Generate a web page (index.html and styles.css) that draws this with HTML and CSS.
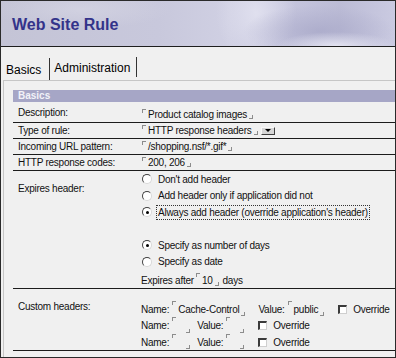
FILE: index.html
```html
<!DOCTYPE html>
<html>
<head>
<meta charset="utf-8">
<link rel="stylesheet" href="styles.css">
</head>
<body>
<div class="frame">
  <header class="banner">
    <h1 class="title">Web Site Rule</h1>
  </header>
  <nav class="tabs">
    <div class="tab tab-first">Basics</div>
    <div class="tab tab-second">Administration</div>
  </nav>
  <div class="panel">
    <div class="bar">Basics</div>
    <div class="row row-desc">
      <div class="label">Description:</div>
      <div class="value"><span class="fl"></span>Product catalog images<span class="fr"></span></div>
    </div>
    <div class="row">
      <div class="label">Type of rule:</div>
      <div class="value"><span class="fl"></span>HTTP response headers<span class="fr"></span><span class="drop"><span class="tri"></span></span></div>
    </div>
    <div class="row">
      <div class="label">Incoming URL pattern:</div>
      <div class="value"><span class="fl"></span>/shopping.nsf/*.gif*<span class="fr"></span></div>
    </div>
    <div class="row">
      <div class="label">HTTP response codes:</div>
      <div class="value"><span class="fl"></span>200, 206<span class="fr"></span></div>
    </div>
    <div class="row row-top row-expires">
      <div class="label label-pad">Expires header:</div>
      <div class="value options">
        <div class="opt"><span class="radio"></span>Don't add header</div>
        <div class="opt"><span class="radio"></span>Add header only if application did not</div>
        <div class="opt"><span class="radio on"></span><span class="focus">Always add header (override application's header)</span></div>
        <div class="opt"></div>
        <div class="opt"><span class="radio on"></span>Specify as number of days</div>
        <div class="opt"><span class="radio"></span>Specify as date</div>
        <div class="after">Expires after <span class="fl"></span>10<span class="fr"></span><span class="days">days</span></div>
      </div>
    </div>
    <div class="row row-top row-custom">
      <div class="label label-pad">Custom headers:</div>
      <div class="value headers">
        <div class="hdr hdr-1">Name: <span class="fl"></span>Cache-Control<span class="fr"></span><span class="val-label">Value: </span><span class="fl"></span>public<span class="fr"></span><span class="check"></span>Override</div>
        <div class="hdr hdr-2">Name: <span class="fl"></span><span class="fr empty"></span><span class="val-label">Value: </span><span class="fl"></span><span class="fr empty"></span><span class="check"></span>Override</div>
        <div class="hdr hdr-3">Name: <span class="fl"></span><span class="fr empty"></span><span class="val-label">Value: </span><span class="fl"></span><span class="fr empty"></span><span class="check"></span>Override</div>
      </div>
    </div>
  </div>
</div>
</body>
</html>
```
FILE: styles.css
```css
html, body {
  margin: 0;
  padding: 0;
  background: #f0f0f0;
}

.frame {
  width: 396px;
  height: 358px;
  box-sizing: border-box;
  border: 1px solid #2a2a2a;
  background: #f0f0f0;
  overflow: hidden;
  font-family: "Liberation Sans", Arial, sans-serif;
  color: #111;
}

.banner {
  height: 45px;
  border-bottom: 1px solid #1e1e1e;
  background:
    radial-gradient(ellipse 60px 14px at 335px 45px, rgba(232,232,244,0.9) 0%, rgba(232,232,244,0) 100%),
    radial-gradient(ellipse 75px 26px at 318px 30px, rgba(168,168,200,0.75) 0%, rgba(168,168,200,0) 100%),
    radial-gradient(ellipse 40px 50px at 255px 12px, rgba(226,226,240,0.9) 0%, rgba(226,226,240,0) 100%),
    radial-gradient(ellipse 90px 20px at 80px 8px, rgba(214,214,228,0.7) 0%, rgba(214,214,228,0) 100%),
    linear-gradient(90deg, #c4c4d6 0%, #c8c8dc 40%, #d0d0e3 58%, #c6c6de 72%, #bcbcd6 86%, #cacae1 100%);
}

.title {
  margin: 0;
  padding: 14px 0 0 11px;
  font: bold 16px/19px "Liberation Sans", Arial, sans-serif;
  color: #33338a;
}

.tabs {
  display: flex;
  height: 33px;
  box-sizing: border-box;
  padding-top: 11px;
}

.tab {
  font-size: 12px;
  line-height: 24px;
  height: 22px;
  border-right: 1px solid #333;
  color: #000;
}

.tab-first {
  padding: 0 8px 0 5px;
}

.tab-second {
  padding: 0 6px 0 4px;
  height: 20px;
  line-height: 22px;
  margin-top: -1px;
}

.panel {
  margin-left: 2px;
  border-top: 1px solid #c6c6c6;
  border-left: 1px solid #c6c6c6;
  padding: 9px 0 0 9px;
  height: 300px;
}

.bar {
  height: 12px;
  background: #a6a6c6;
  color: #f2f2f8;
  font-weight: bold;
  font-size: 10px;
  line-height: 12px;
  padding-left: 5px;
}

.row {
  display: grid;
  grid-template-columns: 128px 1fr;
  align-items: center;
  border-bottom: 1px solid #1c1c1c;
  height: 15px;
  font-size: 10px;
  letter-spacing: -0.25px;
}

.row-desc {
  height: 20px;
}

.row-desc .value {
  padding-top: 4px;
}

.row-top {
  align-items: start;
}

.row-expires {
  height: 117px;
}

.row-custom {
  height: 61px;
}

.label {
  padding-left: 5px;
  white-space: nowrap;
}

.label-pad {
  padding-top: 12px;
}

.value {
  white-space: nowrap;
  display: flex;
  align-items: center;
}

.fl {
  display: inline-block;
  width: 3px;
  height: 3px;
  border-left: 1px solid #8c8c8c;
  border-top: 1px solid #8c8c8c;
  margin: 0 2px 0 1px;
  align-self: flex-start;
}

.fr {
  display: inline-block;
  width: 3px;
  height: 3px;
  border-right: 1px solid #8c8c8c;
  border-bottom: 1px solid #8c8c8c;
  margin: 0 1px 1px 2px;
  align-self: flex-end;
}

.fr.empty {
  margin-left: 8px;
}

.drop {
  display: inline-block;
  width: 14px;
  height: 8px;
  box-sizing: border-box;
  background: #d6d6d6;
  border-top: 1px solid #f8f8f8;
  border-left: 1px solid #f8f8f8;
  border-right: 1px solid #404040;
  border-bottom: 1px solid #404040;
  margin-left: 2px;
  position: relative;
}

.tri {
  position: absolute;
  left: 3px;
  top: 1px;
  width: 0;
  height: 0;
  border-left: 3px solid transparent;
  border-right: 3px solid transparent;
  border-top: 3px solid #000;
}

.options {
  flex-direction: column;
  align-items: flex-start;
}

.opt {
  height: 16.5px;
  display: flex;
  align-items: center;
}

.radio {
  display: inline-block;
  width: 10px;
  height: 10px;
  box-sizing: border-box;
  border-radius: 50%;
  background: #fff;
  border: 1px solid;
  border-color: #404040 #d8d8d8 #d8d8d8 #404040;
  margin: 0 6px 0 1px;
  position: relative;
}

.radio.on::after {
  content: "";
  position: absolute;
  left: 2.5px;
  top: 2.5px;
  width: 3px;
  height: 3px;
  border-radius: 50%;
  background: #000;
}

.focus {
  outline: 1px dotted #333;
  outline-offset: 1px;
}

.after {
  margin-top: 3px;
  height: 14px;
  display: flex;
  align-items: center;
}

.after .fl {
  margin-left: 2px;
}

.days {
  margin-left: 3px;
}

.headers {
  flex-direction: column;
  align-items: flex-start;
  padding-top: 12px;
}

.hdr {
  display: flex;
  align-items: center;
  height: 16px;
}

.hdr-2 {
  height: 17px;
}

.hdr .fl {
  margin-left: 3px;
}

.val-label {
  margin-left: 12px;
}

.hdr-2 .val-label,
.hdr-3 .val-label {
  margin-left: 6px;
}

.check {
  display: inline-block;
  width: 9px;
  height: 9px;
  box-sizing: border-box;
  background: #fff;
  border-top: 2px solid #3a3a3a;
  border-left: 2px solid #3a3a3a;
  border-right: 1px solid #cfcfcf;
  border-bottom: 1px solid #cfcfcf;
  margin: 0 6px 0 13px;
}
```
